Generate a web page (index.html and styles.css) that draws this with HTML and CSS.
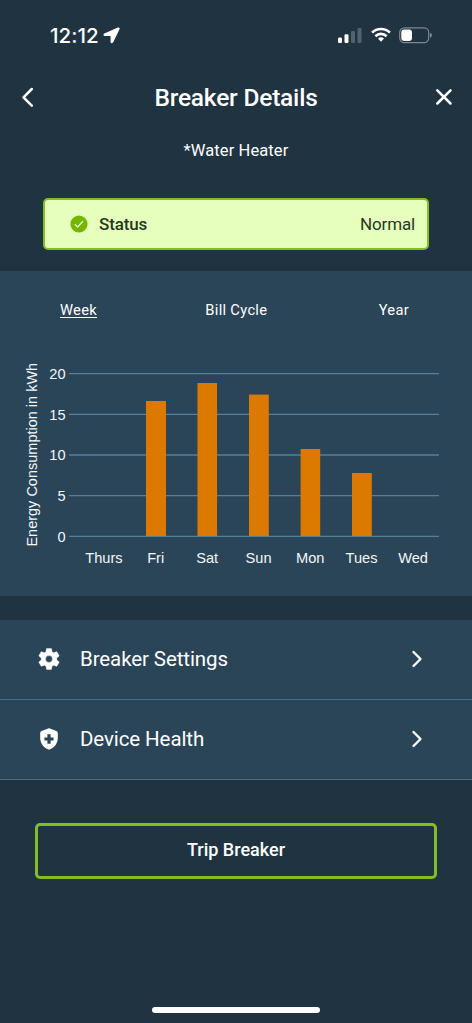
FILE: index.html
```html
<!DOCTYPE html>
<html lang="en">
<head>
<meta charset="utf-8">
<title>Breaker Details</title>
<link rel="stylesheet" href="styles.css">
</head>
<body>
<div class="screen">
  <div class="status-bar">
    <div class="clock">
      <span class="time">12:12</span>
      <svg class="location" width="17" height="17" viewBox="0 0 17 17"><path d="M15.2 1.200 1.600 7.200c-.7.3-.6 1.200.2 1.200H7.700c.3 0 .5.2.5.5v5.900c0 .8 1 1 1.300.3L15.900 1.900c.2-.5-.2-.9-.7-.7z" fill="#fff" stroke="#fff" stroke-width="1.300" stroke-linejoin="round"/></svg>
    </div>
    <div class="indicators">
      <svg width="24" height="17" viewBox="0 0 24 17" fill="#fff">
        <rect x="0" y="10.500" width="4" height="5.500" rx="1.200"/><rect x="6.500" y="7.300" width="4" height="8.700" rx="1.200"/>
        <g opacity=".23"><rect x="13" y="4" width="4" height="12" rx="1.200"/><rect x="19.500" y="1" width="4" height="15" rx="1.200"/></g>
      </svg>
      <svg class="wifi" width="20" height="16" viewBox="0 0 20 16" fill="none" stroke="#fff" stroke-width="2.600">
        <path d="M1.100 5.700a12.600 12.600 0 0 1 17.800 0"/><path d="M4.400 9.200a8 8 0 0 1 11.200 0"/><path d="M7 11.600a4.400 4.400 0 0 1 6 0L10 14.800z" fill="#fff" stroke="none"/>
      </svg>
      <svg class="battery" width="34" height="17" viewBox="0 0 34 17">
        <rect x=".7" y=".9" width="29" height="14.800" rx="4.600" fill="none" stroke="#fff" stroke-opacity=".42" stroke-width="1.200"/>
        <rect x="2.300" y="2.500" width="10.700" height="11.600" rx="3" fill="#fff"/>
        <path d="M31.200 5.800c2.100.8 2.100 4.200 0 5z" fill="#fff" opacity=".5"/>
      </svg>
    </div>
  </div>

  <header class="header">
    <svg width="14" height="22" viewBox="0 0 14 22"><path d="M11.800 3 3.500 11.300l8.300 8.300" fill="none" stroke="#fff" stroke-width="2.500" stroke-linecap="round" stroke-linejoin="round"/></svg>
    <h1 class="title">Breaker Details</h1>
    <svg class="close" width="18" height="18" viewBox="0 0 18 18"><path d="m2.300 2.300 13.200 13.200M15.500 2.300 2.300 15.500" fill="none" stroke="#fff" stroke-width="2.500" stroke-linecap="round"/></svg>
  </header>
  <p class="breaker-name">*Water Heater</p>

  <div class="alert">
    <svg width="18" height="18" viewBox="0 0 18 18"><circle cx="9" cy="9" r="8.600" fill="#76b500"/><path d="m4.800 9.300 2.800 2.700 5.400-5.900" fill="none" stroke="#e6ffbd" stroke-width="1.300"/></svg>
    <span class="alert-label">Status</span>
    <span class="alert-value">Normal</span>
  </div>

  <section class="usage">
    <nav class="tabs">
      <span class="tab active">Week</span>
      <span class="tab">Bill Cycle</span>
      <span class="tab">Year</span>
    </nav>
    <svg class="chart" width="472" height="240" viewBox="0 350 472 240">
      <g stroke="#5480a0" stroke-width="1.300">
        <path d="M69 373.700H439M69 414.400H439M69 455H439M69 495.600H439M69 536.300H439"/>
      </g>
      <g fill="#dc7900">
        <rect x="146" y="401" width="20" height="135"/>
        <rect x="197.500" y="383" width="19.600" height="153"/>
        <rect x="249" y="394.600" width="19.800" height="141.400"/>
        <rect x="300.600" y="449" width="19.600" height="87"/>
        <rect x="352" y="473" width="19.800" height="63"/>
      </g>
      <g class="axis" text-anchor="end">
        <text x="65.500" y="379">20</text><text x="65.500" y="419.600">15</text><text x="65.500" y="460.200">10</text><text x="65.500" y="500.800">5</text><text x="65.500" y="541.500">0</text>
      </g>
      <g class="axis" text-anchor="middle">
        <text x="104" y="563.300">Thurs</text><text x="155.700" y="563.300">Fri</text><text x="207.200" y="563.300">Sat</text><text x="258.600" y="563.300">Sun</text><text x="310.200" y="563.300">Mon</text><text x="361.500" y="563.300">Tues</text><text x="413" y="563.300">Wed</text>
        <text class="axis-title" transform="translate(37.300 454.700) rotate(-90)">Energy Consumption in kWh</text>
      </g>
    </svg>
  </section>

  <div class="menu">
    <div class="row">
      <svg class="row-icon" width="26" height="26" viewBox="0 0 24 24"><path fill="#fff" stroke="#fff" stroke-width=".4" stroke-linejoin="round" d="M19.140 12.940c.04-.3.060-.61.060-.94 0-.32-.02-.64-.07-.94l2.030-1.580c.18-.14.23-.41.12-.61l-1.920-3.320c-.12-.22-.37-.29-.59-.22l-2.390.96c-.5-.38-1.030-.7-1.620-.94l-.36-2.540c-.04-.24-.24-.41-.48-.41h-3.840c-.24 0-.43.17-.47.41l-.36 2.540c-.59.24-1.130.57-1.620.94l-2.390-.96c-.22-.08-.47 0-.59.22L2.740 8.870c-.12.21-.08.47.12.61l2.030 1.580c-.05.3-.09.63-.09.94s.02.64.07.94l-2.030 1.580c-.18.14-.23.41-.12.61l1.920 3.320c.12.22.37.29.59.22l2.390-.96c.5.38 1.030.7 1.620.94l.36 2.540c.05.24.24.41.48.41h3.840c.24 0 .44-.17.47-.41l.36-2.540c.59-.24 1.130-.56 1.620-.94l2.390.96c.22.08.47 0 .59-.22l1.920-3.320c.12-.22.07-.47-.12-.61l-2.010-1.580zM12 15.200a3.200 3.200 0 1 1 0-6.400 3.200 3.200 0 0 1 0 6.400z"/></svg>
      <span class="row-label">Breaker Settings</span>
      <svg class="chevron" width="12" height="18" viewBox="0 0 12 18"><path d="m2.500 2 7 7-7 7" fill="none" stroke="#fff" stroke-width="2.400" stroke-linecap="round" stroke-linejoin="round"/></svg>
    </div>
    <div class="row">
      <svg class="row-icon" width="26" height="26" viewBox="0 0 26 26"><path fill="#fff" fill-rule="evenodd" d="M12.200 2.500 5.600 4.900Q4.200 5.400 4.200 6.900V12c0 5.400 3.500 9.900 8.200 11.400q.6.200 1.200 0c4.700-1.500 8.200-6 8.200-11.400V6.900q0-1.500-1.400-2L13.800 2.500q-.8-.3-1.600 0zM11.400 8.300h3.200v3.200h3v3h-3v3.200h-3.200v-3.200h-3v-3h3z"/></svg>
      <span class="row-label">Device Health</span>
      <svg class="chevron" width="12" height="18" viewBox="0 0 12 18"><path d="m2.500 2 7 7-7 7" fill="none" stroke="#fff" stroke-width="2.400" stroke-linecap="round" stroke-linejoin="round"/></svg>
    </div>
  </div>

  <button class="trip">Trip Breaker</button>
  <div class="home-indicator"></div>
</div>
</body>
</html>
```
FILE: styles.css
```css
* { box-sizing: border-box; }
body { margin: 0; background: #203341; }
.screen {
  display: flex;
  flex-direction: column;
  width: 472px;
  height: 1023px;
  overflow: hidden;
  background: #203341;
  color: #fff;
  font-family: Roboto, sans-serif;
}
.status-bar {
  display: flex;
  justify-content: space-between;
  align-items: center;
  height: 70px;
  padding: 0 39px 0 50px;
}
.clock { display: flex; align-items: center; gap: 4px; }
.time { padding-top: 1px; font: 500 20.5px/24px Inter, sans-serif; letter-spacing: 0.05px; }
.indicators { display: flex; align-items: center; }
.wifi { margin-left: 9px; }
.battery { margin-left: 8px; }
.header {
  display: flex;
  justify-content: space-between;
  align-items: center;
  height: 54px;
  padding: 0 19px 0 20px;
}
.title { margin: 0; padding: 1px 0 0 3px; font-size: 24.500px; font-weight: 500; line-height: 30px; letter-spacing: -0.2px; }
.close { margin-bottom: 1px; }
.breaker-name {
  margin: 15px 0 0;
  text-align: center;
  font-size: 16.500px;
  line-height: 24px;
  letter-spacing: 0.1px;
}
.alert {
  display: flex;
  align-items: center;
  height: 52px;
  margin: 35px 43px 0;
  padding: 0 12px 0 25px;
  border: 2px solid #82bd24;
  border-radius: 5px;
  background: #e6ffbd;
  color: #263823;
  font-size: 17px;
}
.alert-label { margin-left: 11px; font-weight: 500; letter-spacing: -0.15px; }
.alert-value { margin-left: auto; letter-spacing: -0.15px; }
.usage { height: 325px; margin-top: 21px; background: #2b4558; }
.tabs { display: flex; justify-content: space-between; height: 79px; padding: 29px 63px 0 60px; }
.tab { font-size: 14.700px; line-height: 20px; letter-spacing: 0.3px; }
.tab:nth-child(2) { margin-right: 3px; }
.active { text-decoration: underline; text-underline-offset: 2px; }
.chart { display: block; }
.axis { fill: #f2f7fa; font: 14.600px "Liberation Sans", Arial, sans-serif; }
.axis-title { font-size: 14.500px; }
.menu { margin-top: 24px; background: #2b4558; }
.row {
  display: flex;
  align-items: center;
  height: 80px;
  padding: 0 49px 2px 36px;
  border-bottom: 1px solid #476b86;
}
.row-label { margin-left: 18px; font-size: 20.500px; letter-spacing: -0.1px; }
.chevron { margin-left: auto; }
.trip {
  height: 56px;
  margin: 43px 35px 0;
  padding: 0 0 3px;
  border: 3px solid #82bd24;
  border-radius: 5px;
  background: transparent;
  color: #fff;
  font: 500 18px Roboto, sans-serif;
}
.home-indicator { width: 168px; height: 6px; margin: auto auto 10px; border-radius: 3px; background: #fff; }
```
